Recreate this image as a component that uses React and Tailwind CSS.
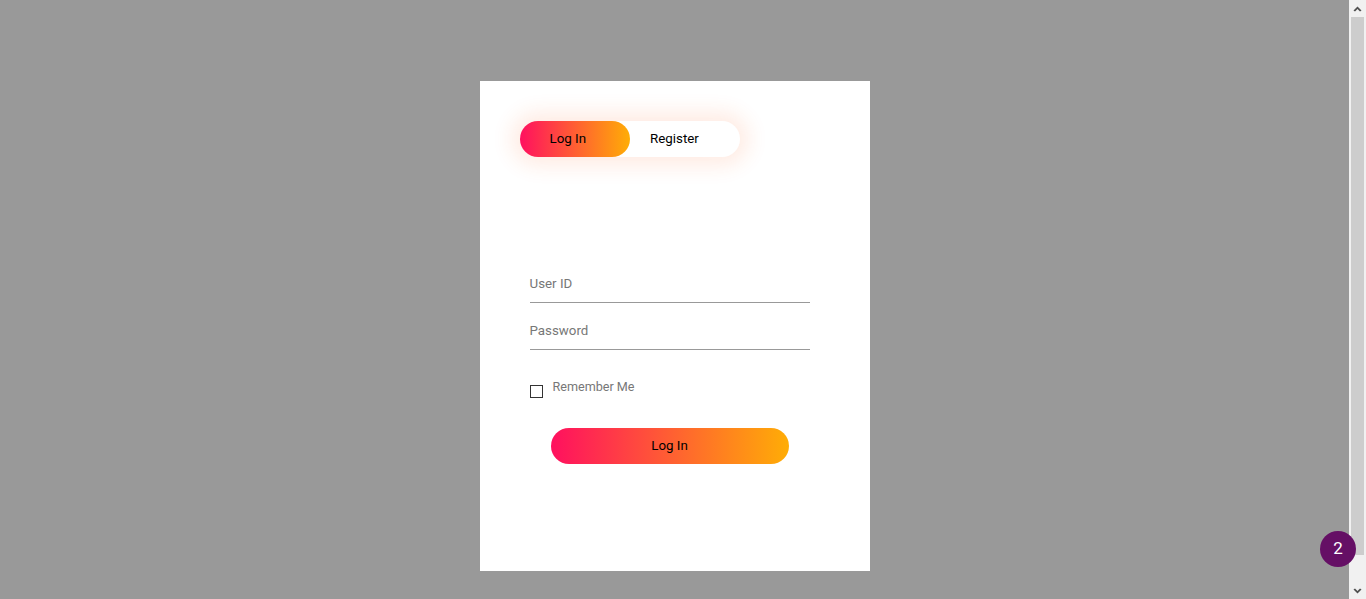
import React from "react";

export default function App() {
  return (
    <div className="relative w-full h-[599px] bg-[#999999] flex" style={{ fontFamily: "Roboto, 'Liberation Sans', sans-serif" }}>
      <div className="flex-1 h-[599px] overflow-hidden">
        <div className="pt-[81px] pb-[59px]">
          <div className="mx-auto w-[390px] h-[490px] bg-white pt-[40px]">
            <div className="relative ml-[40px] w-[220px] h-[36px] rounded-full bg-white flex items-center shadow-[0_0_20px_9px_rgba(255,97,36,0.12)]">
              <div className="absolute left-0 top-0 w-[110px] h-[36px] rounded-full bg-[linear-gradient(to_right,#ff105f,#ffad06)]"></div>
              <span className="relative ml-[30px] text-[13.33px] text-black">Log In</span>
              <span className="relative ml-[64px] text-[13.33px] text-black">Register</span>
            </div>
            <div className="ml-[50px] w-[280px] mt-[109px]">
              <div className="my-[5px] h-[37px] pt-[10px] border-b border-[#999] text-[13.33px] leading-[16px] text-[#777]">User ID</div>
              <div className="my-[10px] h-[37px] pt-[10px] border-b border-[#999] text-[13.33px] leading-[16px] text-[#777]">Password</div>
              <div className="flex items-start mt-[34px]">
                <div className="mt-[1px] w-[13px] h-[13px] border border-[#333] bg-white"></div>
                <span className="ml-[10px] text-[12.6px] leading-[12px] text-[#777] -mt-[3px]">Remember Me</span>
              </div>
              <div className="mx-auto mt-[30px] w-[238px] h-[36px] rounded-full bg-[linear-gradient(to_right,#ff105f,#ffad06)] flex items-center justify-center text-[13.33px] text-black">Log In</div>
            </div>
          </div>
        </div>
      </div>
      <div className="w-[17px] h-[599px] bg-[#f1f1f1] flex flex-col">
        <div className="h-[17px] flex items-center justify-center">
          <svg width="9" height="6" viewBox="0 0 9 6"><path d="M4.5 0.5 L8.5 4.5 L7 5.5 L4.5 3 L2 5.5 L0.5 4.5 Z" fill="#505050" /></svg>
        </div>
        <div className="mx-[2px] h-[538px] bg-[#cdcdcd]"></div>
        <div className="flex-1"></div>
        <div className="h-[17px] flex items-center justify-center">
          <svg width="9" height="6" viewBox="0 0 9 6"><path d="M4.5 5.5 L8.5 1.5 L7 0.5 L4.5 3 L2 0.5 L0.5 1.5 Z" fill="#505050" /></svg>
        </div>
      </div>
      <div className="absolute right-[10px] bottom-[32px] w-[36px] h-[36px] rounded-full bg-[#650f65] flex items-center justify-center text-white text-[17px]">2</div>
    </div>
  );
}
